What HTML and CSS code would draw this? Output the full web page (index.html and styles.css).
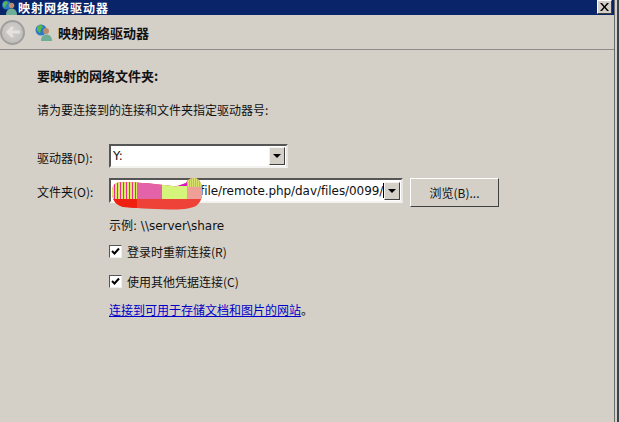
FILE: index.html
```html
<!DOCTYPE html>
<html lang="zh">
<head>
<meta charset="utf-8">
<title>映射网络驱动器</title>
<link rel="stylesheet" href="styles.css">
</head>
<body>
<div class="window">
  <div class="titlebar">
    <svg class="title-icon" width="16" height="15" viewBox="0 0 16 15"><circle cx="5.500" cy="5" r="4.500" fill="#2a78c8"/><path d="M2 3l3-2 2 2-2 2-1 3-2-2z" fill="#58b848"/><circle cx="10.500" cy="5.500" r="2.800" fill="#b98d6a"/><path d="M5 15c0-4 2-6.500 5.500-6.500S16 11 16 15z" fill="#6fae96"/></svg>
    <span class="title-text">映射网络驱动器</span>
    <span class="close"><svg width="9" height="8" viewBox="0 0 9 8"><path d="M0 0h2l2.500 3L7 0h2L5.500 4 9 8H7L4.500 5 2 8H0l3.500-4z" fill="#000"/></svg></span>
  </div>
  <div class="navbar">
    <span class="back"><svg width="20" height="20" viewBox="0 0 20 20"><path d="M17 10H6M10 5l-5 5 5 5" fill="none" stroke="#e4e2de" stroke-width="3"/></svg></span>
    <svg class="nav-icon" width="18" height="17" viewBox="0 0 18 17"><circle cx="6" cy="6" r="5.500" fill="#2a78c8"/><path d="M2 3l3-2.500 3 2-2 3-1 4-3-3z" fill="#58b848"/><circle cx="11" cy="7" r="3" fill="#b98d6a"/><path d="M6 17c0-4 2-6.500 5.500-6.500S17 13 17 17z" fill="#6fae96"/></svg>
    <span class="nav-title">映射网络驱动器</span>
  </div>
  <div class="content">
    <p class="heading">要映射的网络文件夹:</p>
    <p class="instruction">请为要连接到的连接和文件夹指定驱动器号:</p>
    <div class="form">
      <div class="row row-drive">
        <label class="label">驱动器(D):</label>
        <div class="combo combo-drive"><span class="value">Y:</span><span class="arrow"></span></div>
      </div>
      <div class="row row-folder">
        <label class="label">文件夹(O):</label>
        <div class="combo combo-folder">
          <span class="value path">file/remote.php/dav/files/0099/</span><span class="caret"></span><span class="arrow"></span>
          <svg class="blot" width="94" height="36" viewBox="0 0 94 36">
            <defs>
              <pattern id="stripes" width="3" height="2" patternUnits="userSpaceOnUse"><rect width="3" height="2" fill="#d8e868"/><rect x="1" width="1" height="2" fill="#f02890"/></pattern>
              <pattern id="stripes2" width="2" height="2" patternUnits="userSpaceOnUse"><rect width="1" height="2" fill="#d8e070"/><rect x="1" width="1" height="2" fill="#eaa080"/></pattern>
              <clipPath id="blob"><path d="M2 14C3 9 5 7 9 6.500 20 5.500 40 7 66 10.500L76 7C78 3 81 2 85 2 90 3 92 8 92 14 93 22 90 27 86 30 80 33 70 33.500 60 33.500 40 33 24 32 13 31 6 29 3 24 2 19z"/></clipPath>
            </defs>
            <g clip-path="url(#blob)">
              <rect width="94" height="36" fill="#ee4238"/>
              <rect y="23" width="27" height="13" fill="#f02010"/>
              <rect width="27" height="23" fill="url(#stripes)"/>
              <rect x="27" width="25" height="23" fill="#e462a8"/>
              <rect x="52" width="25" height="23" fill="#d4f47c"/>
              <rect x="66" width="11" height="10" fill="#e010c0"/>
              <rect x="77" width="17" height="23" fill="#eea098"/>
              <rect x="77" width="17" height="11" fill="url(#stripes2)"/>
            </g>
          </svg>
        </div>
        <button class="browse" type="button">浏览(B)...</button>
      </div>
      <div class="details">
        <p class="example">示例: \\server\share</p>
        <div class="check check-first"><span class="box"><svg width="9" height="9" viewBox="0 0 9 9"><path d="M1 4l2.500 2.500L8 1.500" fill="none" stroke="#000" stroke-width="2"/></svg></span><span>登录时重新连接(R)</span></div>
        <div class="check check-second"><span class="box"><svg width="9" height="9" viewBox="0 0 9 9"><path d="M1 4l2.500 2.500L8 1.500" fill="none" stroke="#000" stroke-width="2"/></svg></span><span>使用其他凭据连接(C)</span></div>
        <p class="link-row"><a class="link" href="#">连接到可用于存储文档和图片的网站</a>。</p>
      </div>
    </div>
  </div>
</div>
</body>
</html>
```

FILE: styles.css
```css
* { box-sizing: border-box; }
html, body { margin: 0; height: 100%; overflow: hidden; }
body {
  background: #d4d0c8;
  border-right: 2px solid #37454f;
  font-family: "Noto Sans CJK SC", "DejaVu Sans", sans-serif;
  font-size: 12px;
  color: #111;
}
p { margin: 0; }
.window {
  width: 615px;
  height: 422px;
  background: #d4d0c8;
  border-right: 1px solid #6c6c6c;
}
.titlebar {
  height: 15px;
  background: #0a246a;
  color: #fff;
  display: flex;
  align-items: center;
  font-weight: 700;
}
.title-icon { margin: 0 1px 0 1px; flex: none; }
.title-text { font-size: 12px; letter-spacing: 1px; line-height: 15px; flex: 1; }
.close {
  width: 15px;
  height: 14px;
  margin-top: -1px;
  margin-right: 2px;
  background: #d4d0c8;
  border: 1px solid;
  border-color: #fff #404040 #404040 #fff;
  display: flex;
  align-items: center;
  justify-content: center;
}
.navbar {
  height: 35px;
  border-bottom: 1px solid #8e8c88;
  display: flex;
  align-items: center;
}
.back {
  width: 25px;
  height: 25px;
  border-radius: 50%;
  background: radial-gradient(circle at 50% 40%, #d2d0cc, #bcbab6);
  border: 2px solid #a2a09e;
  display: flex;
  align-items: center;
  justify-content: center;
  flex: none;
}
.nav-icon { margin-left: 10px; flex: none; }
.nav-title { margin-left: 5px; font-weight: 700; font-size: 13px; }
.content { padding: 19px 0 0 37px; }
.heading { font-weight: 700; font-size: 13px; line-height: 14px; }
.instruction { margin-top: 20px; line-height: 14px; }
.form { margin-top: 27px; }
.row { display: flex; align-items: flex-start; }
.row-folder { margin-top: 6px; }
.label { width: 72px; line-height: 28px; flex: none; }
.combo {
  position: relative;
  background: #fff;
  border: 2px solid;
  border-color: #555 #e8e6e2 #f4f2ee #555;
  display: flex;
  align-items: center;
  flex: none;
}
.combo-drive { width: 179px; height: 24px; }
.combo-folder { width: 294px; height: 25px; }
.value { padding-left: 2px; flex: 1; font-family: "DejaVu Sans", sans-serif; font-size: 12px; white-space: nowrap; }
.path { padding-left: 89px; flex: none; letter-spacing: -0.07px; }
.caret { width: 1px; height: 15px; background: #000; flex: none; }
.arrow {
  width: 16px;
  height: 18px;
  margin-left: auto;
  margin-right: 1px;
  background: #d4d0c8;
  border: 1px solid;
  border-color: #f4f2ee #404040 #404040 #f4f2ee;
  position: relative;
  flex: none;
}
.arrow::after {
  content: "";
  position: absolute;
  left: 3px;
  top: 6px;
  border: 4px solid transparent;
  border-top: 4px solid #000;
  border-bottom: 0;
}
.blot { position: absolute; left: -1px; top: -4px; }
.browse {
  width: 89px;
  height: 29px;
  margin-left: 7px;
  background: #d4d0c8;
  border: 1px solid;
  border-color: #fff #404040 #404040 #fff;
  font: 12px "Noto Sans CJK SC", sans-serif;
  color: #111;
  padding: 0;
}
.details { margin-left: 72px; }
.example { margin-top: 11px; line-height: 16px; font-family: "DejaVu Sans", "Noto Sans CJK SC", sans-serif; }
.check { display: flex; align-items: center; height: 16px; }
.check-first { margin-top: 9px; }
.check-second { margin-top: 14px; }
.box {
  width: 13px;
  height: 13px;
  background: #fff;
  border: 1px solid;
  border-color: #555 #eee #eee #555;
  margin-right: 5px;
  display: flex;
  align-items: center;
  justify-content: center;
}
.link-row { margin-top: 13px; line-height: 16px; }
.link { color: #0000c8; text-decoration: underline; }
```
